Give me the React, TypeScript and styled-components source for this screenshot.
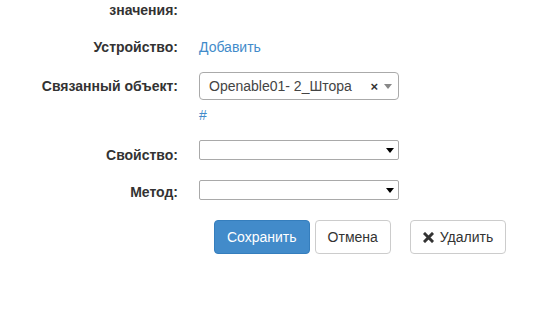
import styled, { createGlobalStyle } from "styled-components";

const GlobalStyle = createGlobalStyle`
  body {
    margin: 0;
    background: #fff;
    font-family: "Liberation Sans", Arial, sans-serif;
    font-size: 14px;
    color: #333;
  }
`;

const Form = styled.div`
  width: 555px;
  height: 317px;
  overflow: hidden;
`;

const Row = styled.div<{ $top: number; $height: number }>`
  display: grid;
  grid-template-columns: 178px 200px;
  column-gap: 21px;
  margin-top: ${(p) => p.$top}px;
  height: ${(p) => p.$height}px;
`;

const Label = styled.label<{ $pad?: number }>`
  text-align: right;
  font-weight: bold;
  line-height: 20px;
  padding-top: ${(p) => p.$pad ?? 0}px;
  white-space: nowrap;
`;

const Link = styled.a`
  color: #428bca;
  text-decoration: none;
  line-height: 20px;
  cursor: pointer;
`;

const Select2 = styled.div`
  box-sizing: border-box;
  height: 28px;
  border: 1px solid #aaa;
  border-radius: 4px;
  display: flex;
  align-items: center;
  padding: 0 6px 0 9px;
  color: #444;
  background: #fff;
`;

const Value = styled.span`
  flex: 1;
`;

const Clear = styled.span`
  font-weight: bold;
  font-size: 13px;
  color: #333;
  margin-right: 6px;
`;

const Caret = styled.span<{ $color: string }>`
  width: 0;
  height: 0;
  border-left: 4px solid transparent;
  border-right: 4px solid transparent;
  border-top: 5px solid ${(p) => p.$color};
`;

const NativeSelect = styled.div`
  box-sizing: border-box;
  height: 20px;
  border: 1px solid #a9a9a9;
  border-radius: 2px;
  display: flex;
  align-items: center;
  justify-content: flex-end;
  padding-right: 4px;
  background: #fff;
`;

const Buttons = styled.div`
  display: flex;
  margin: 19px 0 0 214px;
`;

const Button = styled.button<{ $primary?: boolean; $gap?: number }>`
  box-sizing: border-box;
  height: 34px;
  padding: 0 12px;
  margin-left: ${(p) => p.$gap ?? 0}px;
  font-family: inherit;
  font-size: 14px;
  border-radius: 4px;
  border: 1px solid ${(p) => (p.$primary ? "#357ebd" : "#ccc")};
  background: ${(p) => (p.$primary ? "#428bca" : "#fff")};
  color: ${(p) => (p.$primary ? "#fff" : "#333")};
  display: flex;
  align-items: center;
  gap: 6px;
`;

const RemoveIcon = () => (
  <svg width="11" height="11" viewBox="0 0 11 11">
    <path
      d="M2 2 L9 9 M9 2 L2 9"
      stroke="#333"
      strokeWidth="3"
      strokeLinecap="square"
    />
  </svg>
);

export default function App() {
  return (
    <Form>
      <GlobalStyle />
      <Row $top={1} $height={20}>
        <Label style={{ lineHeight: "18px" }}>значения:</Label>
        <span />
      </Row>
      <Row $top={16} $height={20}>
        <Label>Устройство:</Label>
        <Link>Добавить</Link>
      </Row>
      <Row $top={15} $height={28}>
        <Label $pad={4}>Связанный объект:</Label>
        <Select2>
          <Value>Openable01- 2_Штора</Value>
          <Clear>×</Clear>
          <Caret $color="#888" />
        </Select2>
      </Row>
      <Row $top={5} $height={20}>
        <span />
        <Link>#</Link>
      </Row>
      <Row $top={15} $height={25}>
        <Label $pad={5}>Свойство:</Label>
        <NativeSelect>
          <Caret $color="#000" />
        </NativeSelect>
      </Row>
      <Row $top={15} $height={21}>
        <Label $pad={2}>Метод:</Label>
        <NativeSelect>
          <Caret $color="#000" />
        </NativeSelect>
      </Row>
      <Buttons>
        <Button $primary>Сохранить</Button>
        <Button $gap={5}>Отмена</Button>
        <Button $gap={19}>
          <RemoveIcon />
          Удалить
        </Button>
      </Buttons>
    </Form>
  );
}
